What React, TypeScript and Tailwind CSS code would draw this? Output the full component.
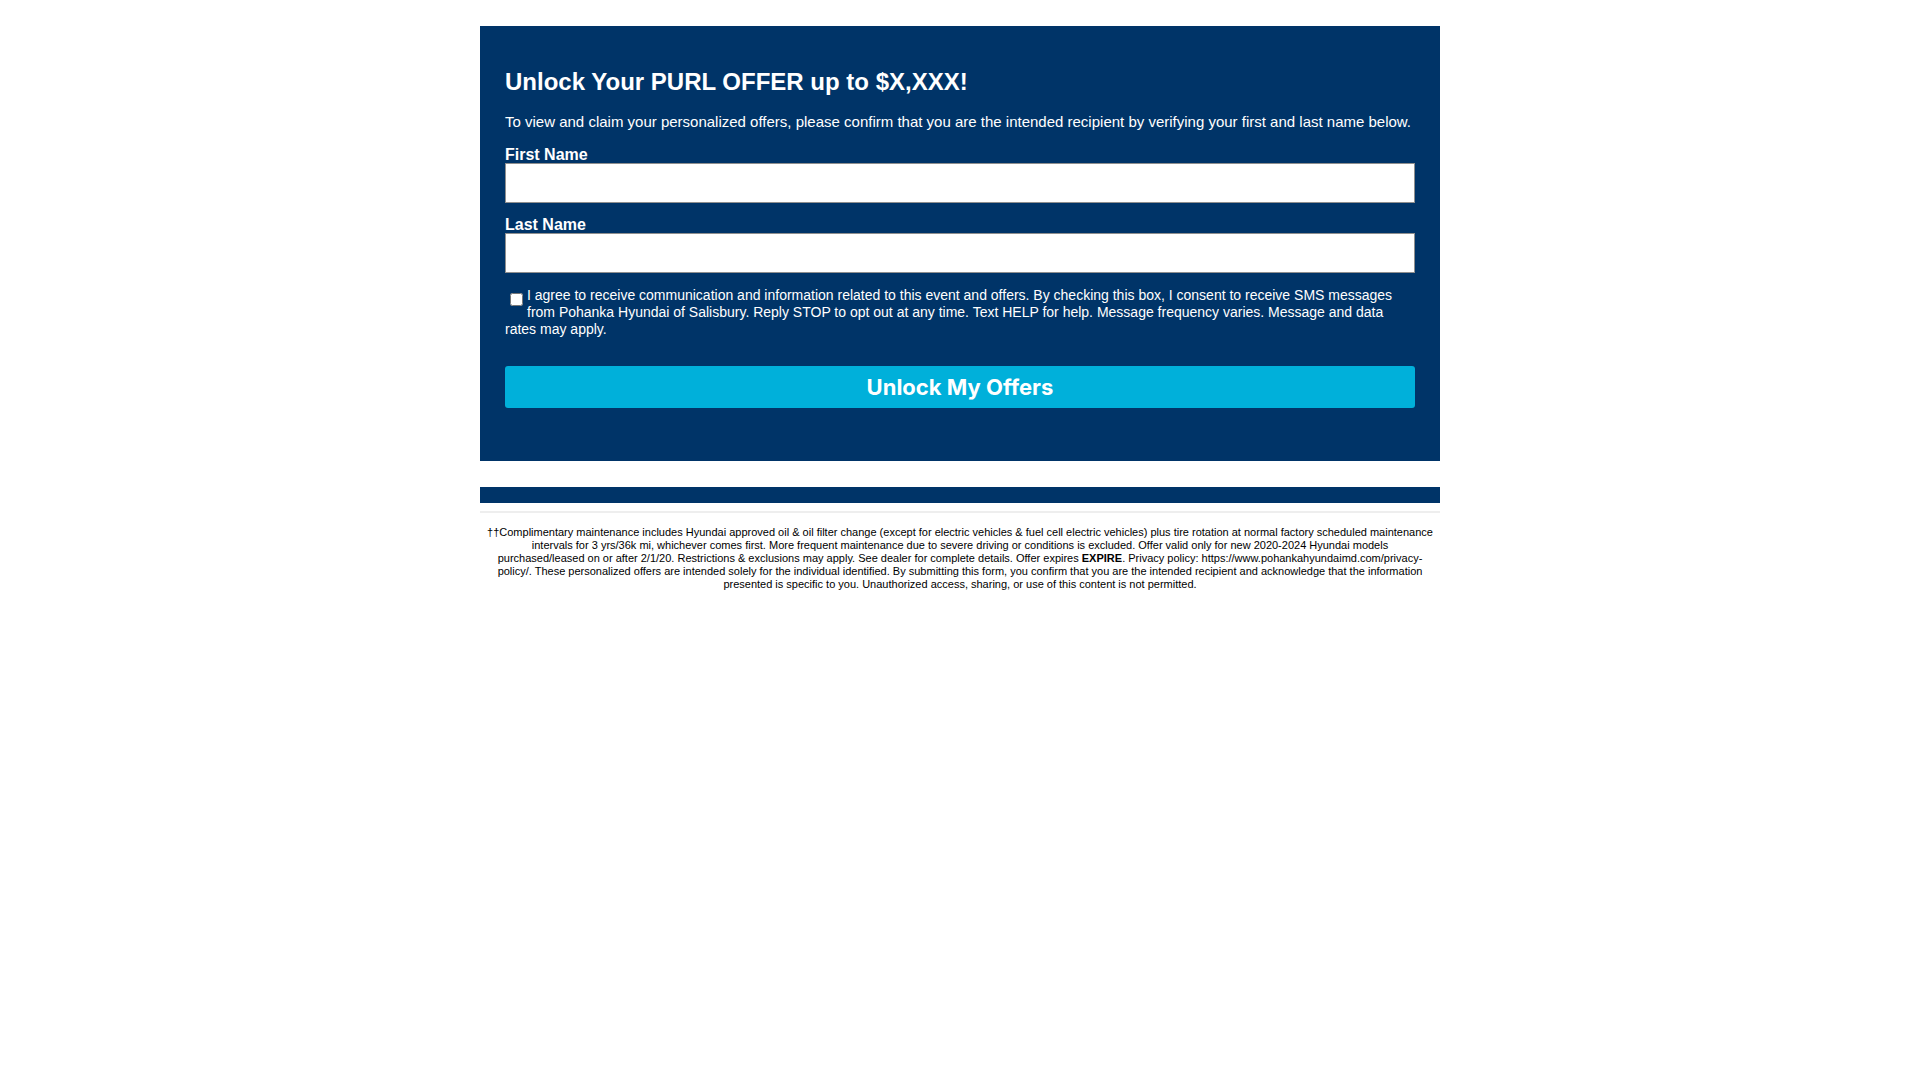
export default function App() {
  const field =
    'block h-10 w-full border border-[#8f8f8f] bg-white px-2 text-base text-black';
  return (
    <main className="mx-auto w-full max-w-[960px] pt-[26px] font-['Liberation_Sans',Arial,sans-serif]">
      <form className="bg-[#003468] px-[25px] pt-10 pb-[53px] text-white" onSubmit={(e) => e.preventDefault()}>
        <h1 className="text-2xl leading-8 font-bold">Unlock Your PURL OFFER up to $X,XXX!</h1>
        <p className="mt-[15px] text-[15px] leading-[18px]">
          To view and claim your personalized offers, please confirm that you are the intended recipient by verifying
          your first and last name below.
        </p>
        <label htmlFor="first" className="mt-4 block text-base leading-4 font-bold">First Name</label>
        <input id="first" type="text" className={field} />
        <label htmlFor="last" className="mt-[14px] block text-base leading-4 font-bold">Last Name</label>
        <input id="last" type="text" className={field} />
        <div className="mt-[14px] text-sm leading-[17px]">
          <input id="agree" type="checkbox" className="float-left mt-[6px] mr-1 mb-1 ml-[5px] size-[13px]" />
          <label htmlFor="agree">
            I agree to receive communication and information related to this event and offers. By checking this box, I
            consent to receive SMS messages from Pohanka Hyundai of Salisbury. Reply STOP to opt out at any time. Text
            HELP for help. Message frequency varies. Message and data rates may apply.
          </label>
        </div>
        <button type="submit" className="mt-7 block h-[42px] w-full rounded-[3px] bg-[#00b0da] font-[Inter,sans-serif] text-[22px] font-bold">
          Unlock My Offers
        </button>
      </form>
      <div className="mt-[26px] h-4 bg-[#003468]" />
      <footer className="mt-2 border-t-2 border-[#eeeeee] px-[6px] pt-[13px] text-center text-[11px] leading-[13px] text-black">
        ††Complimentary maintenance includes Hyundai approved oil &amp; oil filter change (except for electric vehicles
        &amp; fuel cell electric vehicles) plus tire rotation at normal factory scheduled maintenance intervals for 3
        yrs/36k mi, whichever comes first. More frequent maintenance due to severe driving or conditions is excluded.
        Offer valid only for new 2020-2024 Hyundai models <br />
        purchased/leased on or after 2/1/20. Restrictions &amp;
        exclusions may apply. See dealer for complete details. Offer expires <strong>EXPIRE</strong>. Privacy policy:
        https://www.pohankahyundaimd.com/privacy-policy/. These personalized offers are intended solely for the
        individual identified. By submitting this form, you confirm that you are the intended recipient and acknowledge
        that the information presented is specific to you. Unauthorized access, sharing, or use of this content is not
        permitted.
      </footer>
    </main>
  );
}
